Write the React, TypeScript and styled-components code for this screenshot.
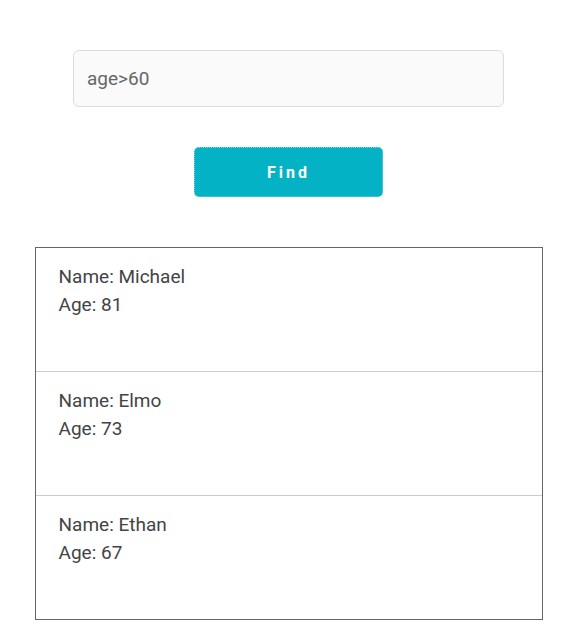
import styled, { createGlobalStyle } from 'styled-components';

const people = [
    { name: 'Michael', age: 81 },
    { name: 'Elmo', age: 73 },
    { name: 'Ethan', age: 67 },
];

const GlobalStyle = createGlobalStyle`
    body {
        margin: 0;
        background: #fff;
        font-family: Roboto, "Liberation Sans", sans-serif;
    }
`

function App() {
    return (
        <Page>
            <GlobalStyle />
            <SearchInput defaultValue="age>60" />
            <FindButton>Find</FindButton>
            <ResultList>
                {people.map((p) => (
                    <ResultItem key={p.name}>
                        <div>Name: {p.name}</div>
                        <div>Age: {p.age}</div>
                    </ResultItem>
                ))}
            </ResultList>
        </Page>
    )
}

export default App

const Page = styled.main`
    display: flex;
    flex-direction: column;
    align-items: center;
    padding-top: 50px;
    padding-left: 1px;
`

const SearchInput = styled.input`
    box-sizing: border-box;
    width: 431px;
    height: 57px;
    padding: 0 13px;
    border: 1px solid #dcdcdc;
    border-radius: 6px;
    background: #fafafa;
    color: #666;
    font-family: Roboto, sans-serif;
    font-size: 19px;
    outline: none;
`

const FindButton = styled.button`
    box-sizing: border-box;
    margin-top: 40px;
    width: 189px;
    height: 50px;
    border: 1px dotted #7fd3dc;
    border-radius: 5px;
    background: #03b3c5;
    color: #fff;
    font-family: Roboto, sans-serif;
    font-weight: 700;
    font-size: 16px;
    letter-spacing: 3px;
    cursor: pointer;
`

const ResultList = styled.ul`
    box-sizing: border-box;
    margin: 50px 0 0;
    padding: 0;
    list-style: none;
    width: 508px;
    border: 1px solid #666;
`

const ResultItem = styled.li`
    box-sizing: border-box;
    height: 123px;
    padding: 15px 23px;
    color: #444;
    font-size: 19px;
    line-height: 28px;

    & + & {
        height: 124px;
        border-top: 1px solid #ccc;
    }
`
